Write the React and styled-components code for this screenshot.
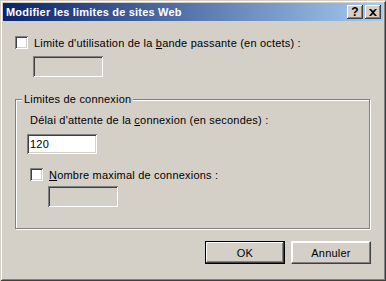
import styled, { createGlobalStyle } from "styled-components";

const GlobalStyle = createGlobalStyle`
  html, body {
    margin: 0;
    padding: 0;
    background: #d4d0c8;
  }
  body {
    font-family: "Liberation Sans", Tahoma, sans-serif;
    font-size: 11px;
    letter-spacing: 0.2px;
    color: #000;
  }
`;

const Window = styled.div`
  width: 386px;
  height: 281px;
  box-sizing: border-box;
  padding: 3px;
  display: flex;
  flex-direction: column;
  background: #d4d0c8;
  box-shadow: inset 1px 1px 0 #d4d0c8, inset -1px -1px 0 #404040,
    inset 2px 2px 0 #ffffff, inset -2px -2px 0 #808080;
`;

const TitleBar = styled.div`
  height: 18px;
  display: flex;
  align-items: center;
  padding: 0 2px 0 3px;
  background: linear-gradient(to right, #0a246a, #a6caf0);
`;

const Title = styled.div`
  flex: 1;
  color: #fff;
  font-weight: bold;
  font-size: 11px;
  white-space: nowrap;
`;

const CaptionButton = styled.div`
  width: 16px;
  height: 14px;
  box-sizing: border-box;
  margin-left: ${(p) => (p.$gap ? "2px" : "0")};
  display: flex;
  align-items: center;
  justify-content: center;
  background: #d4d0c8;
  box-shadow: inset -1px -1px 0 #404040, inset 1px 1px 0 #ffffff,
    inset -2px -2px 0 #808080;
  font-weight: bold;
  font-size: 12px;
  line-height: 1;
`;

const Body = styled.div`
  flex: 1;
  display: flex;
  flex-direction: column;
  padding: 15px 12px 0 12px;
`;

const CheckRow = styled.label`
  display: flex;
  align-items: center;
  gap: 6px;
  height: 13px;
  margin-left: ${(p) => p.$indent || 0}px;
  margin-top: ${(p) => p.$top || 0}px;
  white-space: nowrap;
`;

const CheckBox = styled.span`
  width: 13px;
  height: 13px;
  box-sizing: border-box;
  flex: none;
  background: #fff;
  box-shadow: inset 1px 1px 0 #808080, inset -1px -1px 0 #ffffff,
    inset 2px 2px 0 #404040, inset -2px -2px 0 #d4d0c8;
`;

const TextBox = styled.div`
  width: 70px;
  height: ${(p) => p.$h || 20}px;
  box-sizing: border-box;
  padding: 0 3px;
  display: flex;
  align-items: center;
  margin-left: ${(p) => p.$indent || 0}px;
  margin-top: ${(p) => p.$top || 0}px;
  background: ${(p) => (p.$disabled ? "#d4d0c8" : "#fff")};
  box-shadow: inset 1px 1px 0 #808080, inset -1px -1px 0 #ffffff,
    inset 2px 2px 0 #404040, inset -2px -2px 0 #d4d0c8;
`;

const GroupBox = styled.div`
  margin: 22px 1px 0 0;
  height: 130px;
  box-sizing: border-box;
  border: 1px solid #808080;
  box-shadow: 1px 1px 0 #ffffff, inset 1px 1px 0 #ffffff;
  padding: 0 0 0 11px;
  display: flex;
  flex-direction: column;
  align-items: flex-start;
`;

const GroupLabel = styled.div`
  margin: -7px 0 0 -5px;
  padding: 0 2px;
  height: 13px;
  line-height: 13px;
  background: #d4d0c8;
`;

const Text = styled.div`
  height: 13px;
  line-height: 13px;
  margin-left: ${(p) => p.$indent || 0}px;
  margin-top: ${(p) => p.$top || 0}px;
  white-space: nowrap;
`;

const ButtonRow = styled.div`
  display: flex;
  justify-content: flex-end;
  gap: 6px;
  margin-top: 12px;
`;

const Button = styled.div`
  width: 80px;
  height: 23px;
  box-sizing: border-box;
  display: flex;
  align-items: center;
  justify-content: center;
  background: #d4d0c8;
  border: 1px solid ${(p) => (p.$default ? "#000" : "transparent")};
  box-shadow: ${(p) =>
    p.$default
      ? "inset -1px -1px 0 #404040, inset 1px 1px 0 #ffffff, inset -2px -2px 0 #808080"
      : "inset -1px -1px 0 #808080, inset 1px 1px 0 #ffffff"};
  ${(p) =>
    !p.$default &&
    `border-color: #ffffff #404040 #404040 #ffffff;`}
`;

export default function App() {
  return (
    <>
      <GlobalStyle />
      <Window>
        <TitleBar>
          <Title>Modifier les limites de sites Web</Title>
          <CaptionButton>?</CaptionButton>
          <CaptionButton $gap>
            <svg width="8" height="7" viewBox="0 0 8 7">
              <path d="M0 0h2l2 2 2-2h2L5 3.5 8 7H6L4 5 2 7H0l3-3.5z" fill="#000" />
            </svg>
          </CaptionButton>
        </TitleBar>
        <Body>
          <CheckRow>
            <CheckBox />
            <span>
              Limite d'utilisation de la <u>b</u>ande passante (en octets) :
            </span>
          </CheckRow>
          <TextBox $disabled $h={21} $indent={18} $top={7} />
          <GroupBox>
            <GroupLabel>Limites de connexion</GroupLabel>
            <Text $indent={3} $top={8}>
              Délai d'attente de la <u>c</u>onnexion (en secondes) :
            </Text>
            <TextBox $top={7}>120</TextBox>
            <CheckRow $indent={3} $top={14}>
              <CheckBox />
              <span>
                <u>N</u>ombre maximal de connexions :
              </span>
            </CheckRow>
            <TextBox $disabled $h={21} $indent={21} $top={5} />
          </GroupBox>
          <ButtonRow>
            <Button $default>OK</Button>
            <Button>Annuler</Button>
          </ButtonRow>
        </Body>
      </Window>
    </>
  );
}
